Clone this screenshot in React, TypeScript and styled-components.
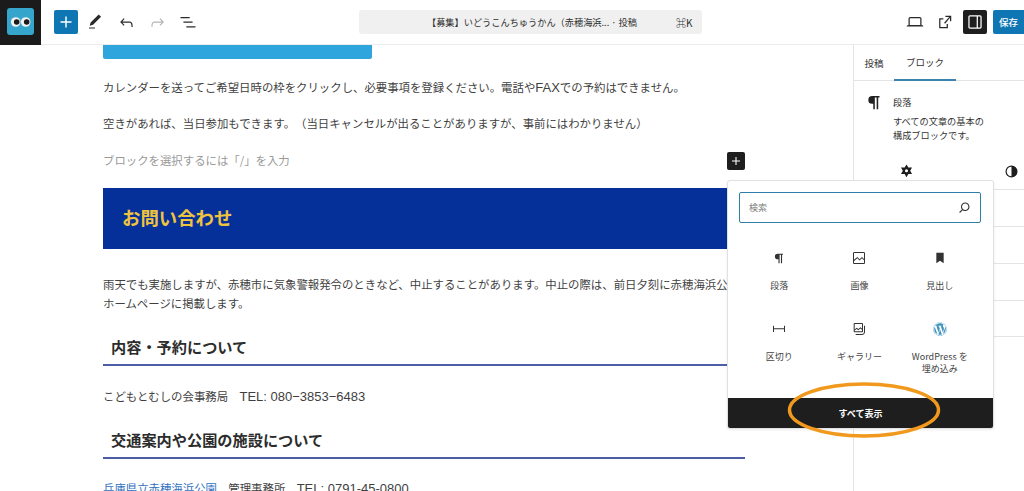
import styled, { createGlobalStyle } from 'styled-components';
import { FaWordpress } from 'react-icons/fa';

const paths = {
	plus: 'M18 11.2h-5.2V6h-1.6v5.2H6v1.6h5.2V18h1.6v-5.2H18z',
	edit: 'M20.1 5.1L16.9 2 6.2 12.7l-1.3 4.4 4.5-1.3L20.1 5.1zM4 20.8h8v-1.5H4v1.5z',
	undo: 'M18.3 11.7c-.6-.6-1.4-.9-2.3-.9H6.7l2.9-3.3-1.1-1-4.5 5L8.5 16l1-1-2.7-2.7H16c.5 0 .9.2 1.3.5 1 1 1 3.4 1 4.5v.3h1.5v-.2c0-1.5 0-4.3-1.5-5.7z',
	redo: 'M15.6 6.5l-1.1 1 2.9 3.3H8c-.9 0-1.7.3-2.3.9-1.4 1.5-1.4 4.2-1.4 5.6v.2h1.5v-.3c0-1.1 0-3.5 1-4.5.3-.3.7-.5 1.3-.5h9.2L14.5 15l1.1 1.1 4.6-4.6-4.6-5z',
	list: 'M3 6h11v1.5H3V6zm3.5 5.5h11V13h-11v-1.5zM21 17H10v1.5h11V17z',
	laptop: 'M20.5 16h-.7V8c0-1.1-.9-2-2-2H6.2c-1.1 0-2 .9-2 2v8h-.7c-.8 0-1.5.7-1.5 1.5h20c0-.8-.7-1.5-1.5-1.5zM5.7 8c0-.3.2-.5.5-.5h11.6c.3 0 .5.2.5.5v7.6H5.7V8z',
	external: 'M19.5 4.5h-7V6h4.44l-5.97 6.97 1.14.98L18 6.99V11h1.5V4.5zM14 18H6.5V9H10V7.5H5v12h10.5v-5H14V18z',
	sidebar: 'M18 4H6c-1.1 0-2 .9-2 2v12c0 1.1.9 2 2 2h12c1.1 0 2-.9 2-2V6c0-1.1-.9-2-2-2zM5.5 18V6c0-.3.2-.5.5-.5h8v13H6c-.3 0-.5-.2-.5-.5zm13 0c0 .3-.2.5-.5.5h-2.5v-13H18c.3 0 .5.2.5.5v12z',
	paragraph: 'M18 5.5H10a4.2 4.2 0 0 0 0 8.4h1.2V20h1.7V7.2h2V20h1.7V7.2H18z',
	gear: 'M12 2l2.6 4.400 5.200-.1-2.600 4.700 2.600 4.700-5.200-.1L12 20l-2.600-4.400-5.200.1L6.800 11 4.200 6.300l5.200.1zM12 8.800a2.200 2.200 0 1 0 0 4.400 2.200 2.200 0 0 0 0-4.400z',
	half: 'M12 3.500a8.500 8.500 0 1 0 0 17 8.500 8.500 0 0 0 0-17zm0 1.700v13.600a6.800 6.800 0 0 1 0-13.600z',
	search: 'M13 5c-3.300 0-6 2.700-6 6 0 1.400.5 2.700 1.300 3.700l-3.800 3.800 1.100 1.100 3.800-3.800c1 .8 2.300 1.300 3.700 1.300 3.300 0 6-2.700 6-6S16.300 5 13 5zm0 10.500c-2.500 0-4.500-2-4.500-4.500s2-4.500 4.500-4.500 4.500 2 4.500 4.500-2 4.500-4.500 4.500z',
	image: 'M19 3H5c-1.100 0-2 .9-2 2v14c0 1.100.9 2 2 2h14c1.100 0 2-.9 2-2V5c0-1.100-.9-2-2-2zM5 4.500h14c.3 0 .5.2.5.5v8.400l-3-2.900-3.700 3.300-3.300-3.400-5 4.400V5c0-.3.2-.5.5-.5zM4.500 16.800l5-4.400 3.300 3.400 3.700-3.300 3 2.900V19c0 .3-.2.5-.5.5H5c-.3 0-.5-.2-.5-.5z',
	bookmark: 'M6.500 4v16l5.500-4 5.500 4V4z',
	separator: 'M4.500 12.500v4H3V7h1.500v3.987h15V7H21v9.500h-1.500v-4h-15Z',
	gallery: 'M16.400 3H5.600C4.700 3 4 3.700 4 4.600v10.800c0 .9.7 1.600 1.600 1.600h10.800c.9 0 1.600-.7 1.600-1.600V4.600c0-.9-.7-1.600-1.600-1.600zM5.600 4.500h10.800c.1 0 .1 0 .1.100v6.800l-2.500-2-3 2.600-2.500-1.800-3 2.500V4.600c0-.1 0-.1.1-.1zM5.500 14.400l3-2.500 2.500 1.800 3-2.600 2.500 2v2.300c0 .1 0 .1-.1.100H5.600c-.1 0-.1 0-.1-.1zM19.500 7v9.500c0 1.700-1.300 3-3 3H7V21h9.500c2.500 0 4.500-2 4.500-4.500V7h-1.500z',
};

type IconName = keyof typeof paths;

function Icon({ name, size = 24 }: { name: IconName; size?: number }) {
	return (
		<svg width={size} height={size} viewBox="0 0 24 24" fill="currentColor" aria-hidden="true">
			<path d={paths[name]} fillRule="evenodd" />
		</svg>
	);
}

const inserterItems: { icon: IconName | 'wp'; label: string }[] = [
	{ icon: 'paragraph', label: '段落' },
	{ icon: 'image', label: '画像' },
	{ icon: 'bookmark', label: '見出し' },
	{ icon: 'separator', label: '区切り' },
	{ icon: 'gallery', label: 'ギャラリー' },
	{ icon: 'wp', label: 'WordPress を\n埋め込み' },
];

export default function App() {
	return (
		<Page>
			<GlobalStyle />
			<TopBar>
				<LogoBox>
					<LogoMark>
						<svg width="27" height="27" viewBox="0 0 27 27" aria-hidden="true">
							<circle cx="8.700" cy="14" r="4.800" fill="#f2f2f2" />
							<circle cx="18.700" cy="14" r="4.800" fill="#f2f2f2" />
							<circle cx="9.700" cy="14" r="2.800" fill="#1b1b1b" />
							<circle cx="19.700" cy="14" r="2.800" fill="#1b1b1b" />
						</svg>
					</LogoMark>
				</LogoBox>
				<LeftTools>
					<PlusButton>
						<Icon name="plus" size={22} />
					</PlusButton>
					<ToolIcon>
						<Icon name="edit" size={18} />
					</ToolIcon>
					<ToolIcon>
						<Icon name="undo" size={19} />
					</ToolIcon>
					<ToolIcon $muted>
						<Icon name="redo" size={19} />
					</ToolIcon>
					<ToolIcon>
						<Icon name="list" size={20} />
					</ToolIcon>
				</LeftTools>
				<CommandCenter>
					<CommandTitle>【募集】いどうこんちゅうかん（赤穂海浜... · 投稿</CommandTitle>
					<CommandKey>⌘K</CommandKey>
				</CommandCenter>
				<RightTools>
					<ToolIcon>
						<Icon name="laptop" size={20} />
					</ToolIcon>
					<ToolIcon>
						<Icon name="external" size={20} />
					</ToolIcon>
					<PanelToggle>
						<Icon name="sidebar" size={20} />
					</PanelToggle>
					<SaveButton>保存</SaveButton>
				</RightTools>
			</TopBar>

			<Workspace>
				<Editor>
					<CoverBar />
					<Para $top={19}>
						カレンダーを送ってご希望日時の枠をクリックし、必要事項を登録ください。電話や<Latin>FAX</Latin>での予約はできません。
					</Para>
					<Para $top={17}>
						空きがあれば、当日参加もできます。（当日キャンセルが出ることがありますが、事前にはわかりません）
					</Para>
					<PlaceholderRow>
						<Placeholder>ブロックを選択するには「/」を入力</Placeholder>
						<InlineAdd>
							<Icon name="plus" size={16} />
						</InlineAdd>
					</PlaceholderRow>
					<Banner>お問い合わせ</Banner>
					<Para $top={26}>
						雨天でも実施しますが、赤穂市に気象警報発令のときなど、中止することがあります。中止の際は、前日夕刻に赤穂海浜公園
						<br />
						ホームページに掲載します。
					</Para>
					<SectionHeading $top={22}>内容・予約について</SectionHeading>
					<Para $top={21}>
						こどもとむしの会事務局　<Latin>TEL: 080−3853−6483</Latin>
					</Para>
					<SectionHeading $top={22}>交通案内や公園の施設について</SectionHeading>
					<Para $top={20}>
						<ParkLink>兵庫県立赤穂海浜公園</ParkLink>　管理事務所　<Latin>TEL: 0791-45-0800</Latin>
					</Para>
				</Editor>

				<Sidebar>
					<Tabs>
						<Tab>投稿</Tab>
						<Tab $active>ブロック</Tab>
					</Tabs>
					<BlockCard>
						<BlockIcon>
							<Icon name="paragraph" size={22} />
						</BlockIcon>
						<BlockText>
							<BlockName>段落</BlockName>
							<BlockDesc>
								すべての文章の基本の
								<br />
								構成ブロックです。
							</BlockDesc>
						</BlockText>
					</BlockCard>
					<StyleTabs>
						<StyleTab>
							<Icon name="gear" size={17} />
						</StyleTab>
						<StyleTab>
							<Icon name="half" size={17} />
						</StyleTab>
					</StyleTabs>
					<PanelRow />
					<PanelRow />
					<PanelRow />
					<PanelRow />
				</Sidebar>
			</Workspace>

			<Inserter>
				<SearchBox>
					<SearchLabel>検索</SearchLabel>
					<Icon name="search" size={17} />
				</SearchBox>
				<ItemGrid>
					{inserterItems.map((item) => (
						<Item key={item.label}>
							<ItemIcon $wp={item.icon === 'wp'}>
								{item.icon === 'wp' ? <FaWordpress size={14} /> : <Icon name={item.icon} size={16} />}
							</ItemIcon>
							<ItemLabel>{item.label}</ItemLabel>
						</Item>
					))}
				</ItemGrid>
				<ShowAll>すべて表示</ShowAll>
			</Inserter>

			<Callout width="160" height="60" viewBox="0 0 160 60" aria-hidden="true">
				<ellipse cx="80" cy="29" rx="74.500" ry="26" fill="none" stroke="#f0991d" strokeWidth="3.500" />
			</Callout>
		</Page>
	);
}

const GlobalStyle = createGlobalStyle`
	html, body {
		margin: 0;
		padding: 0;
		background: #ffffff;
	}

	body {
		font-family: 'Noto Sans CJK JP', 'Noto Sans', sans-serif;
		color: #3d3d3d;
		text-spacing-trim: space-all;
	}

	* {
		box-sizing: border-box;
	}
`;

const Page = styled.div`
	position: relative;
	width: 1024px;
	height: 491px;
	overflow: hidden;
	background: #ffffff;
`;

const TopBar = styled.header`
	display: flex;
	align-items: center;
	height: 45px;
	border-bottom: 1px solid #ececec;
`;

const LogoBox = styled.div`
	display: flex;
	align-items: center;
	justify-content: center;
	width: 41px;
	height: 45px;
	padding-bottom: 2px;
	background: #1b1b1b;
`;

const LogoMark = styled.div`
	width: 27px;
	height: 27px;
	border-radius: 3px;
	background: #36a5cb;
`;

const LeftTools = styled.div`
	display: flex;
	align-items: center;
	width: 318px;
	padding-left: 13px;
	gap: 7px;
`;

const PlusButton = styled.div`
	display: flex;
	align-items: center;
	justify-content: center;
	width: 24px;
	height: 24px;
	margin-right: -2px;
	border-radius: 2px;
	background: #0f76b4;
	color: #ffffff;
`;

const ToolIcon = styled.div<{ $muted?: boolean }>`
	display: flex;
	align-items: center;
	justify-content: center;
	width: 24px;
	height: 24px;
	color: ${(p) => (p.$muted ? '#b5b5b5' : '#2a2a2a')};
`;

const CommandCenter = styled.div`
	display: flex;
	align-items: center;
	width: 343px;
	height: 24px;
	padding-left: 68px;
	border-radius: 3px;
	background: #f0f0f0;
`;

const CommandTitle = styled.span`
	width: 249px;
	font-size: 9.2px;
	white-space: nowrap;
	color: #2f2f2f;
`;

const CommandKey = styled.span`
	font-size: 10px;
	color: #2f2f2f;
`;

const RightTools = styled.div`
	display: flex;
	align-items: center;
	margin-left: auto;
	gap: 6px;
`;

const PanelToggle = styled.div`
	display: flex;
	align-items: center;
	justify-content: center;
	width: 24px;
	height: 24px;
	border-radius: 2px;
	background: #1e1e1e;
	color: #ffffff;
`;

const SaveButton = styled.div`
	display: flex;
	align-items: center;
	justify-content: center;
	width: 31px;
	height: 24px;
	border-radius: 2px 0 0 2px;
	background: #0f76b4;
	color: #ffffff;
	font-size: 9.5px;
	font-weight: 500;
`;

const Workspace = styled.div`
	display: flex;
	height: 446px;
`;

const Editor = styled.main`
	width: 853px;
	padding: 0 108px 0 103px;
	overflow: hidden;
`;

const CoverBar = styled.div`
	width: 269px;
	height: 14px;
	border-radius: 0 0 2px 2px;
	background: #2ea5dc;
`;

const Para = styled.p<{ $top: number }>`
	margin: ${(p) => p.$top}px 0 0;
	font-size: 11.4px;
	line-height: 19px;
	white-space: nowrap;
	overflow: hidden;
	color: #3f3f3f;
`;

const Latin = styled.span`
	font-family: 'Liberation Sans', 'Noto Sans CJK JP', sans-serif;
	font-size: 13px;
`;

const PlaceholderRow = styled.div`
	display: flex;
	align-items: center;
	justify-content: space-between;
	height: 19px;
	margin-top: 18px;
`;

const Placeholder = styled.span`
	margin-top: -2px;
	font-size: 11.4px;
	color: #9a9a9a;
`;

const InlineAdd = styled.div`
	display: flex;
	align-items: center;
	justify-content: center;
	width: 18px;
	height: 18px;
	border-radius: 2px;
	background: #1e1e1e;
	color: #ffffff;
`;

const Banner = styled.h2`
	display: flex;
	align-items: center;
	height: 61px;
	margin: 18px 0 0;
	padding: 0 0 4px 19px;
	background: #05309a;
	color: #eec33f;
	font-size: 18.4px;
	font-weight: 700;
`;

const SectionHeading = styled.h3<{ $top: number }>`
	margin: ${(p) => p.$top}px 0 0;
	padding: 0 8px 7px;
	border-bottom: 2px solid #4c5ea6;
	font-size: 15.2px;
	font-weight: 700;
	line-height: 22px;
	color: #2c2c2c;
`;

const ParkLink = styled.a`
	color: #2f6fc0;
	text-decoration: underline;
`;

const Sidebar = styled.aside`
	flex: 1;
	border-left: 1px solid #e4e4e4;
	overflow: hidden;
`;

const Tabs = styled.div`
	display: flex;
	height: 36px;
	border-bottom: 1px solid #e4e4e4;
`;

const Tab = styled.div<{ $active?: boolean }>`
	display: flex;
	align-items: center;
	justify-content: center;
	height: 36px;
	width: ${(p) => (p.$active ? '62px' : '40px')};
	border-bottom: ${(p) => (p.$active ? '2px solid #3a84ad' : 'none')};
	font-size: 9.5px;
	white-space: nowrap;
	color: #333333;
`;

const BlockCard = styled.div`
	display: flex;
	height: 72px;
	padding: 10px 0 0 9px;
`;

const BlockIcon = styled.div`
	width: 30px;
	color: #222222;
`;

const BlockText = styled.div`
	display: flex;
	flex-direction: column;
	padding-top: 3px;
`;

const BlockName = styled.div`
	font-size: 9.2px;
	line-height: 16px;
	color: #333333;
`;

const BlockDesc = styled.div`
	margin-top: 4px;
	font-size: 9.2px;
	line-height: 14px;
	white-space: nowrap;
	color: #333333;
`;

const StyleTabs = styled.div`
	display: flex;
	width: 220px;
	height: 37px;
	padding-top: 10px;
	border-bottom: 1px solid #e4e4e4;
`;

const StyleTab = styled.div`
	display: flex;
	justify-content: center;
	width: 105px;
	color: #1e1e1e;
`;

const PanelRow = styled.div`
	height: 37px;
	border-bottom: 1px solid #e4e4e4;

	&:last-child {
		height: 36px;
	}
`;

const Inserter = styled.section`
	position: absolute;
	left: 727px;
	top: 180px;
	display: flex;
	flex-direction: column;
	width: 267px;
	height: 249px;
	border: 1px solid #dfe1e4;
	border-radius: 3px;
	background: #ffffff;
	box-shadow: 0 1px 3px rgba(0, 0, 0, 0.08);
	overflow: hidden;
`;

const SearchBox = styled.div`
	display: flex;
	align-items: center;
	justify-content: space-between;
	height: 31px;
	margin: 11px 12px 0 11px;
	padding: 0 7px 0 9px;
	border: 1.5px solid #2f7fa8;
	border-radius: 2px;
	color: #333333;
`;

const SearchLabel = styled.span`
	font-size: 9px;
	color: #7c7c7c;
`;

const ItemGrid = styled.div`
	display: grid;
	grid-template-columns: repeat(3, 80.3px);
	grid-auto-rows: 71px;
	margin: 25px 0 0 11px;
`;

const Item = styled.div`
	display: flex;
	flex-direction: column;
	align-items: center;
`;

const ItemIcon = styled.div<{ $wp?: boolean }>`
	display: flex;
	align-items: center;
	justify-content: center;
	height: 20px;
	color: ${(p) => (p.$wp ? '#3f93bd' : '#333333')};
`;

const ItemLabel = styled.div`
	margin-top: 12px;
	font-size: 9px;
	line-height: 12px;
	text-align: center;
	white-space: pre-line;
	color: #444444;
`;

const ShowAll = styled.div`
	display: flex;
	align-items: center;
	justify-content: center;
	height: 30px;
	margin-top: auto;
	background: #1e1e1e;
	color: #ffffff;
	font-size: 9px;
	font-weight: 700;
`;

const Callout = styled.svg`
	position: absolute;
	left: 784px;
	top: 381px;
`;
